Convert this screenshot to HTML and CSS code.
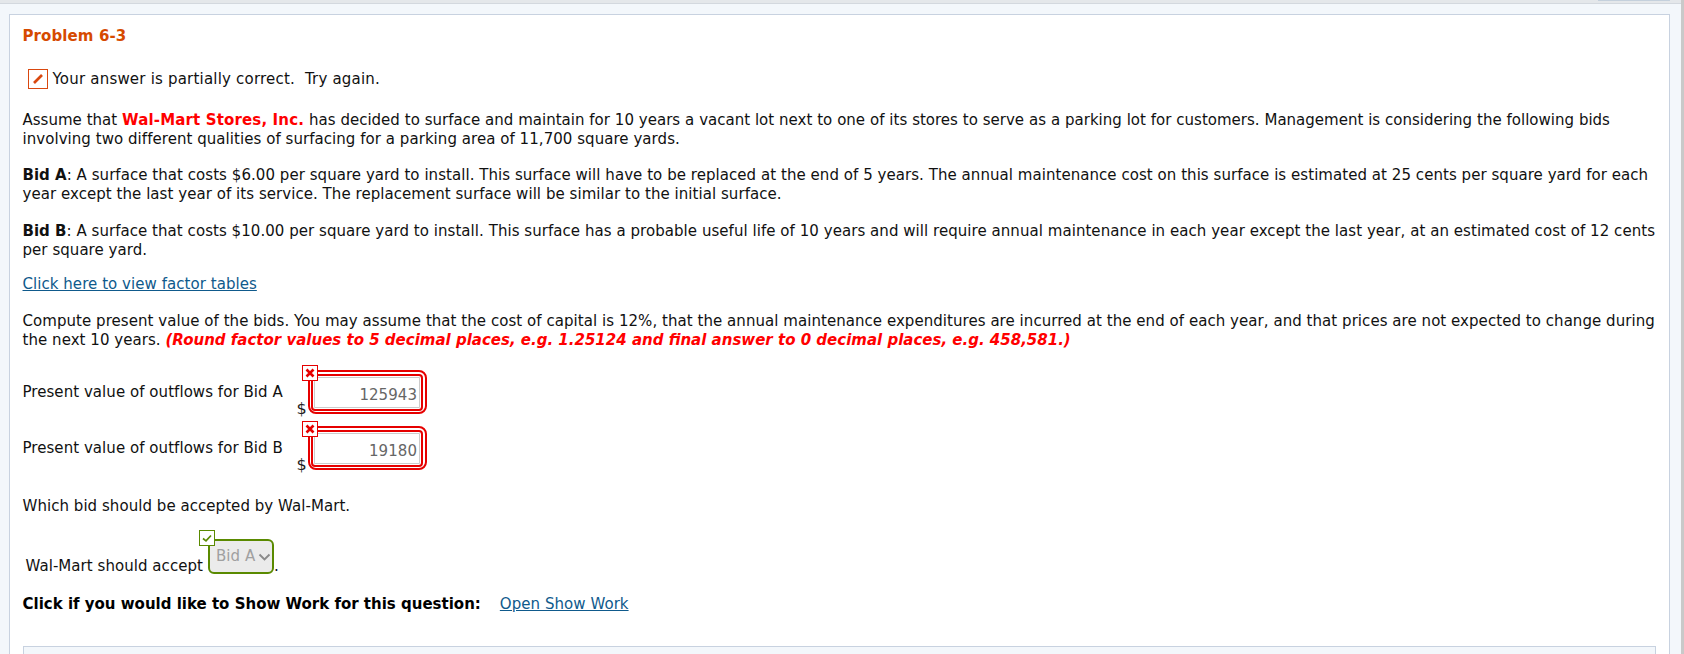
FILE: index.html
```html
<!DOCTYPE html>
<html lang="en">
<head>
<meta charset="utf-8">
<title>Problem 6-3</title>
<link rel="stylesheet" href="styles.css">
</head>
<body>
<div class="topbar"><span class="tab"></span></div>
<div class="page">
  <main class="panel">
    <h1 class="title">Problem 6-3</h1>
    <p class="status"><span class="flag"><svg width="18" height="18" viewBox="0 0 18 18"><path d="M5 13 L13 5" stroke="#d9480f" stroke-width="2.6" fill="none"/></svg></span><span class="status-text">Your answer is partially correct.&nbsp; Try again.</span></p>
    <p class="para first"><span class="narrow">Assume that </span><b class="red brand">Wal-Mart Stores, Inc.</b><span class="narrow"> has decided to surface and maintain for 10 years a vacant lot next to one of its stores to serve as a parking lot for customers. Management is considering the following bids</span><br>involving two different qualities of surfacing for a parking area of 11,700 square yards.</p>
    <p class="para tight"><b>Bid A</b>: A surface that costs $6.00 per square yard to install. This surface will have to be replaced at the end of 5 years. The annual maintenance cost on this surface is estimated at 25 cents per square yard for each<br>year except the last year of its service. The replacement surface will be similar to the initial surface.</p>
    <p class="para"><b>Bid B</b>: A surface that costs $10.00 per square yard to install. This surface has a probable useful life of 10 years and will require annual maintenance in each year except the last year, at an estimated cost of 12 cents<br>per square yard.</p>
    <p class="para link-para"><a href="#">Click here to view factor tables</a></p>
    <p class="para">Compute present value of the bids. You may assume that the cost of capital is 12%, that the annual maintenance expenditures are incurred at the end of each year, and that prices are not expected to change during<br>the next 10 years. <b class="red"><i>(Round factor values to 5 decimal places, e.g. 1.25124 and final answer to 0 decimal places, e.g. 458,581.)</i></b></p>
    <div class="answers">
      <div class="answer">
        <span class="label">Present value of outflows for Bid A</span>
        <span class="dollar">$</span>
        <span class="field"><span class="mark mark-x"><svg width="12" height="12" viewBox="0 0 12 12"><path d="M2.5 2.5 L9.5 9.5 M9.5 2.5 L2.5 9.5" stroke="#e60000" stroke-width="2.6" fill="none"/></svg></span><span class="value">125943</span></span>
      </div>
      <div class="answer">
        <span class="label">Present value of outflows for Bid B</span>
        <span class="dollar">$</span>
        <span class="field"><span class="mark mark-x"><svg width="12" height="12" viewBox="0 0 12 12"><path d="M2.5 2.5 L9.5 9.5 M9.5 2.5 L2.5 9.5" stroke="#e60000" stroke-width="2.6" fill="none"/></svg></span><span class="value">19180</span></span>
      </div>
    </div>
    <p class="para which">Which bid should be accepted by Wal-Mart.</p>
    <div class="accept">
      <span>Wal-Mart should accept</span>
      <span class="select"><span class="mark mark-ok"><svg width="12" height="12" viewBox="0 0 12 12"><path d="M2 6.5 L5 8.8 L10 3.5" stroke="#5a8a00" stroke-width="1.7" fill="none"/></svg></span>Bid A<svg class="chev" width="13" height="8" viewBox="0 0 13 8"><path d="M1.5 1.5 L6.5 6.5 L11.5 1.5" stroke="#8a8a8a" stroke-width="1.9" fill="none"/></svg></span><span>.</span>
    </div>
    <p class="work"><b>Click if you would like to Show Work for this question:</b><a href="#">Open Show Work</a></p>
    <div class="lower"></div>
  </main>
  <div class="scroll"></div>
</div>
</body>
</html>
```
FILE: styles.css
```css
* { box-sizing: border-box; }
html, body { margin: 0; height: 654px; overflow: hidden; }
body {
  background: #f3f7fb;
  color: #111;
  font-family: "DejaVu Sans", Verdana, sans-serif;
  font-size: 15px;
  line-height: 19px;
  letter-spacing: 0.05px;
}
b { letter-spacing: 0; }
.topbar {
  height: 4px;
  background: #e4e7ea;
  border-bottom: 1px solid #d3d8de;
  display: flex;
  justify-content: flex-end;
  padding-right: 14px;
}
.tab { width: 72px; height: 1px; background: #c4d0dc; }
.page { display: flex; height: 650px; padding: 10px 0 0 9px; position: relative; }
.panel {
  width: 1661px;
  height: 660px;
  background: #fff;
  border: 1px solid #c8d2e0;
  padding: 12px 13px 0 12.5px;
  flex: none;
}
.scroll { position: absolute; top: -4px; right: 0; width: 3px; height: 654px; background: #c9c9c9; }
.title { margin: 0; font-size: 15px; font-weight: bold; color: #d64a00; line-height: 19px; letter-spacing: 0.1px; }
.status { margin: 23px 0 0 5px; display: flex; align-items: center; height: 20px; }
.status-text { letter-spacing: 0.2px; }
.flag { width: 20px; height: 20px; border: 1.5px solid #d9480f; display: inline-flex; align-items: center; justify-content: center; margin-right: 5px; flex: none; }
.para { margin: 18px 0 0; white-space: nowrap; }
.para.first { margin-top: 22px; }
.para.tight { margin-top: 17px; }
.para.link-para { margin-top: 15px; }
.narrow { letter-spacing: 0; word-spacing: 0.14px; }
.brand { letter-spacing: 0.15px; }
.red { color: #f00; }
a { color: #0f5a8c; text-decoration: underline; }
.answers { margin-top: 16px; }
.answer { display: flex; align-items: flex-start; height: 56px; position: relative; }
.label { width: 274px; margin-top: 17px; flex: none; }
.dollar { margin-top: 33px; width: 11px; color: #222; flex: none; font-size: 16px; }
.field {
  position: relative;
  width: 119px;
  height: 44px;
  border: 2.3px solid #e60000;
  border-radius: 8px;
  padding: 1.5px;
  display: block;
  margin-top: 4px;
}
.value {
  display: block;
  height: 100%;
  border: 2px solid #e60000;
  border-radius: 4px;
  box-shadow: inset 0 0 0 1px #fff, inset 0 0 0 2px #ccc;
  text-align: right;
  padding: 10px 4px 0 0;
  color: #666;
  background: #fff;
}
.mark {
  position: absolute;
  left: -8px;
  top: -7px;
  width: 16px;
  height: 16px;
  background: #fff;
  display: flex;
  align-items: center;
  justify-content: center;
}
.mark-x { border: 1px solid #e60000; }
.mark-ok { border: 1px solid #5a8a00; top: -11px; left: -11px; }
.which { margin-top: 19px; }
.accept { margin: 24px 0 0 3px; display: flex; align-items: flex-end; height: 36px; }
.select {
  position: relative;
  margin: 0 0 2px 5px;
  width: 66px;
  height: 35px;
  border: 2.3px solid #5a8a00;
  border-radius: 6px;
  background: #ebebeb;
  color: #a0a0a0;
  display: flex;
  align-items: center;
  padding: 0 0 0 6px;
  gap: 3px;
  flex: none;
}
.work { margin: 19px 0 0; display: flex; gap: 19px; }
.work b { color: #000; }
.lower { margin-top: 32px; width: 1633px; height: 40px; background: #f3f7fb; border: 1px solid #c8d2e0; }
```
